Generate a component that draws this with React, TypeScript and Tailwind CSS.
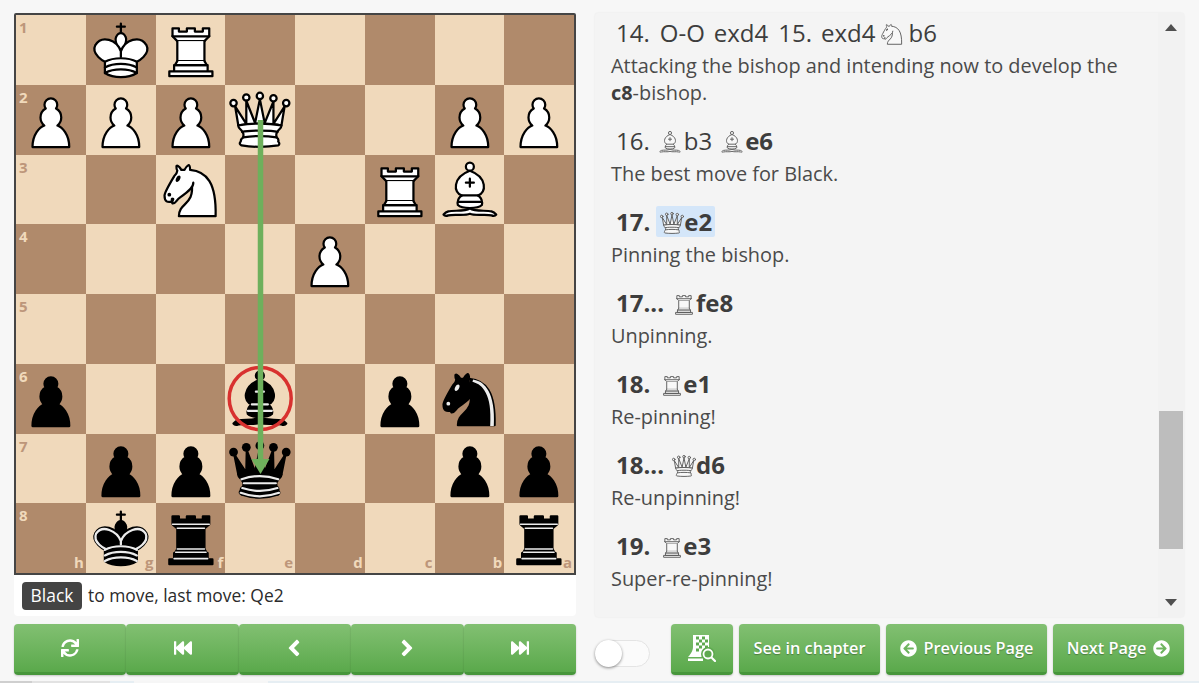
import React from "react";
import { FaSync, FaFastBackward, FaFastForward, FaAngleLeft, FaAngleRight, FaArrowCircleLeft, FaArrowCircleRight } from "react-icons/fa";

type Kind = "K" | "Q" | "R" | "B" | "N" | "P";

const PAWN = "M22.5 9c-2.21 0-4 1.79-4 4 0 .89.29 1.71.78 2.38C17.33 16.5 16 18.59 16 21c0 2.03.94 3.84 2.41 5.03-3 1.06-7.41 5.55-7.41 13.47h23c0-7.92-4.41-12.41-7.41-13.47 1.47-1.19 2.41-3 2.41-5.03 0-2.41-1.33-4.5-3.28-5.62.49-.67.78-1.49.78-2.38 0-2.21-1.79-4-4-4z";
const Q_BASE = "M9 26c0 2 1.5 2 2.5 4 1 1.5 1 1 .5 3.5-1.5 1-1.5 2.5-1.5 2.5-1.5 1.5.5 2.5.5 2.5 6.5 1 16.5 1 23 0 0 0 1.5-1 0-2.5 0 0 .5-1.5-1-2.5-.5-2.5-.5-2 .5-3.5 1-2 2.5-2 2.5-4-8.5-1.5-18.5-1.5-27 0z";
const B1 = "M9 36c3.39-.97 10.11.43 13.5-2 3.39 2.43 10.11 1.03 13.5 2 0 0 1.65.54 3 2-.68.97-1.65.99-3 .5-3.39-.97-10.11.46-13.5-1-3.39 1.46-10.11.03-13.5 1-1.35.49-2.32.47-3-.5 1.35-1.46 3-2 3-2z";
const B2 = "M15 32c2.5 2.5 12.5 2.5 15 0 .5-1.5 0-2 0-2 0-2.5-2.5-4-2.5-4 5.5-1.5 6-11.5-5-15.5-11 4-10.5 14-5 15.5 0 0-2.5 1.5-2.5 4 0 0-.5.5 0 2z";
const B3 = "M25 8a2.5 2.5 0 1 1-5 0 2.5 2.5 0 1 1 5 0z";
const N1 = "M22 10c10.5 1 16.5 8 16 29H15c0-9 10-6.5 8-21";
const N2 = "M24 18c.38 2.91-5.55 7.37-8 9-3 2-2.82 4.34-5 4-1.042-.94 1.41-3.04 0-3-1 0 .19 1.23-1 2-1 0-4.003 1-4-4 0-2 6-12 6-12s1.89-1.9 2-3.5c-.73-.994-.5-2-.5-3 1-1 3 2.5 3 2.5h2s.78-1.992 2.5-3c1 0 1 3 1 3";
const N_EYE = "M9.5 25.5a.5.5 0 1 1-1 0 .5.5 0 1 1 1 0zm5.433-9.75a.5 1.5 30 1 1-.866-.5.5 1.5 30 1 1 .866.5z";
const K_BODY = "M12.5 37c5.5 3.5 14.5 3.5 20 0v-7s9-4.5 6-10.5c-4-6.5-13.5-3.5-16 4V27v-3.5c-2.5-7.5-12-10.5-16-4-3 6 6 10.5 6 10.5v7";
const K_HEAD = "M22.5 25s4.5-7.5 3-10.5c0 0-1-2.5-3-2.5s-3 2.5-3 2.5c-1.5 3 3 10.5 3 10.5";
const K_BANDS = "M12.5 30c5.5-3 14.5-3 20 0m-20 3.5c5.5-3 14.5-3 20 0m-20 3.5c5.5-3 14.5-3 20 0";

function WhiteShape({ kind, fill }: { kind: Kind; fill: string }) {
  switch (kind) {
    case "P":
      return <path d={PAWN} fill={fill} />;
    case "K":
      return (
        <g fill="none">
          <path strokeLinejoin="miter" d="M22.5 11.63V6M20 8h5" />
          <path fill={fill} strokeLinecap="butt" strokeLinejoin="miter" d={K_HEAD} />
          <path fill={fill} d={K_BODY} />
          <path d={K_BANDS} />
        </g>
      );
    case "Q":
      return (
        <g fill={fill}>
          <path d="M8 12a2 2 0 1 1-4 0 2 2 0 1 1 4 0zm16.5-4.5a2 2 0 1 1-4 0 2 2 0 1 1 4 0zM41 12a2 2 0 1 1-4 0 2 2 0 1 1 4 0zM16 8.5a2 2 0 1 1-4 0 2 2 0 1 1 4 0zM33 9a2 2 0 1 1-4 0 2 2 0 1 1 4 0z" />
          <path strokeLinecap="butt" d="M9 26c8.5-1.5 21-1.5 27 0l2-12-7 11V11l-5.5 13.5-3-15-3 15-5.5-14V25L7 14l2 12z" />
          <path strokeLinecap="butt" d={Q_BASE} />
          <path fill="none" d="M11.5 30c3.5-1 18.5-1 22 0M12 33.5c6-1 15-1 21 0" />
        </g>
      );
    case "R":
      return (
        <g fill={fill}>
          <path strokeLinecap="butt" d="M9 39h27v-3H9v3zM12 36v-4h21v4H12zM11 14V9h4v2h5V9h5v2h5V9h4v5" />
          <path d="M34 14l-3 3H14l-3-3" />
          <path strokeLinecap="butt" strokeLinejoin="miter" d="M31 17v12.5H14V17" />
          <path d="M31 29.5l1.5 2.5h-20l1.5-2.5" />
          <path fill="none" strokeLinejoin="miter" d="M11 14h23" />
        </g>
      );
    case "B":
      return (
        <g fill="none">
          <g fill={fill} strokeLinecap="butt">
            <path d={B1} />
            <path d={B2} />
            <path d={B3} />
          </g>
          <path strokeLinejoin="miter" d="M17.5 26h10M15 30h15m-7.5-14.5v5M20 18h5" />
        </g>
      );
    case "N":
      return (
        <g fill="none">
          <path fill={fill} d={N1} />
          <path fill={fill} d={N2} />
          <path fill="currentColor" d={N_EYE} />
        </g>
      );
  }
}

function BlackShape({ kind }: { kind: Kind }) {
  switch (kind) {
    case "P":
      return <path d={PAWN} fill="#000" />;
    case "K":
      return (
        <g fill="none">
          <path strokeLinejoin="miter" d="M22.5 11.63V6" />
          <path fill="#000" strokeLinecap="butt" strokeLinejoin="miter" d={K_HEAD} />
          <path fill="#000" d={K_BODY} />
          <path strokeLinejoin="miter" d="M20 8h5" />
          <path stroke="#ececec" d="M32 29.5s8.5-4 6.03-9.65C34.15 14 25 18 22.5 24.5v2.1-2.1C20 18 10.85 14 6.97 19.85 4.5 25.5 13 29.5 13 29.5" />
          <path stroke="#ececec" d={K_BANDS} />
        </g>
      );
    case "Q":
      return (
        <g fill="#000">
          <g stroke="none">
            <circle cx="6" cy="12" r="2.75" />
            <circle cx="14" cy="9" r="2.75" />
            <circle cx="22.5" cy="8" r="2.75" />
            <circle cx="31" cy="9" r="2.75" />
            <circle cx="39" cy="12" r="2.75" />
          </g>
          <path strokeLinecap="butt" d="M9 26c8.5-1.5 21-1.5 27 0l2.5-12.5L31 25l-.3-14.1-5.2 13.6-3-14.5-3 14.5-5.2-13.6L14 25 6.5 13.5 9 26z" />
          <path strokeLinecap="butt" d={Q_BASE} />
          <path fill="none" strokeLinecap="butt" d="M11 38.5a35 35 1 0 0 23 0" />
          <path fill="none" stroke="#ececec" d="M11 29a35 35 1 0 1 23 0m-21.5 2.5h20m-21 3a35 35 1 0 0 22 0m-23 3a35 35 1 0 0 24 0" />
        </g>
      );
    case "R":
      return (
        <g fill="#000">
          <path strokeLinecap="butt" d="M9 39h27v-3H9v3zM12.5 32l1.5-2.5h17l1.5 2.5h-20zM12 36v-4h21v4H12z" />
          <path strokeLinecap="butt" strokeLinejoin="miter" d="M14 29.5v-13h17v13H14z" />
          <path strokeLinecap="butt" d="M14 16.5L11 14h23l-3 2.5H14zM11 14V9h4v2h5V9h5v2h5V9h4v5H11z" />
          <path fill="none" stroke="#ececec" strokeLinejoin="miter" strokeWidth="1" d="M12 35.5h21M13 31.5h19M14 29.5h17M14 16.5h17M11 14h23" />
        </g>
      );
    case "B":
      return (
        <g fill="none">
          <g fill="#000" strokeLinecap="butt">
            <path d={B1} />
            <path d={B2} />
            <path d={B3} />
          </g>
          <path stroke="#ececec" strokeLinejoin="miter" d="M17.5 26h10M15 30h15m-7.5-14.5v5M20 18h5" />
        </g>
      );
    case "N":
      return (
        <g fill="none">
          <path fill="#000" d={N1} />
          <path fill="#000" d={N2} />
          <path fill="#ececec" stroke="#ececec" d={N_EYE} />
          <path fill="#ececec" stroke="none" d="M24.55 10.4l-.45 1.45.5.15c3.15 1 5.65 2.49 7.9 6.75S35.75 29.06 35.25 39l-.05.5h2.25l.05-.5c.5-10.06-.88-16.85-3.25-21.34-2.37-4.49-5.79-6.64-9.19-7.16l-.51-.1z" />
        </g>
      );
  }
}

function BoardPiece({ code }: { code: string }) {
  const kind = code[1] as Kind;
  return (
    <svg viewBox="0 0 45 45" className="block h-full w-full scale-[1.03] text-black" stroke="#000" strokeWidth="1.4" strokeLinecap="round" strokeLinejoin="round" fillRule="evenodd">
      {code[0] === "w" ? <WhiteShape kind={kind} fill="#fff" /> : <BlackShape kind={kind} />}
    </svg>
  );
}

function Fig({ kind, className }: { kind: Kind; className?: string }) {
  return (
    <svg viewBox="0 0 45 45" className={`inline-block h-[28px] w-[28px] align-[-6px] text-[#555] ${className ?? ""}`} stroke="#5a5a5a" strokeWidth="1.5" strokeLinecap="round" strokeLinejoin="round" fillRule="evenodd">
      <WhiteShape kind={kind} fill="#f8f8f8" />
    </svg>
  );
}

const BOARD: string[][] = [
  ["", "wK", "wR", "", "", "", "", ""],
  ["wP", "wP", "wP", "wQ", "", "", "wP", "wP"],
  ["", "", "wN", "", "", "wR", "wB", ""],
  ["", "", "", "", "wP", "", "", ""],
  ["", "", "", "", "", "", "", ""],
  ["bP", "", "", "bB", "", "bP", "bN", ""],
  ["", "bP", "bP", "bQ", "", "", "bP", "bP"],
  ["", "bK", "bR", "", "", "", "", "bR"],
];
const FILES = ["h", "g", "f", "e", "d", "c", "b", "a"];

function Board() {
  return (
    <div className="relative h-[562px] w-[562px] rounded-t-[2px] border-2 border-[#454545]">
      <div className="grid h-[558px] w-[558px] grid-cols-8 grid-rows-8">
        {BOARD.flatMap((row, r) =>
          row.map((code, c) => {
            const light = (r + c) % 2 === 0;
            return (
              <div key={`${r}-${c}`} className={light ? "relative bg-[#f0d9bb] text-[#bd967a]" : "relative bg-[#b08a6b] text-[#f0d9bb]"}>
                {code && <BoardPiece code={code} />}
                {c === 0 && <span className="absolute left-[3px] top-[2px] text-[15px] font-bold leading-[20px]">{r + 1}</span>}
                {r === 7 && <span className="absolute bottom-[1px] right-[2px] text-[15px] font-bold leading-[20px]">{FILES[c]}</span>}
              </div>
            );
          })
        )}
      </div>
      <svg viewBox="0 0 558 558" className="pointer-events-none absolute left-0 top-0 h-[558px] w-[558px]">
        <circle cx="244.2" cy="383.5" r="31" fill="none" stroke="#d8312f" strokeWidth="3.5" />
        <path d="M244.5 105V447" stroke="#6eb05c" strokeWidth="5.5" fill="none" />
        <path d="M235.5 444 H253.5 L244.5 459 Z" fill="#6eb05c" />
      </svg>
    </div>
  );
}

const GREEN = "flex h-[51px] items-center justify-center rounded-[4px] border-b-[3px] border-[#47963b] bg-gradient-to-b from-[#82c072] to-[#5aa94b] text-white shadow-[0_1px_2px_rgba(0,0,0,0.2)] [text-shadow:0_1px_1px_rgba(0,0,0,0.3)]";

function NavButton({ children }: { children: React.ReactNode }) {
  return <div className={`${GREEN} flex-1`}>{children}</div>;
}

function TextButton({ w, children }: { w: string; children: React.ReactNode }) {
  return <div className={`${GREEN} ${w} gap-[7px] text-[16.3px] font-semibold`}>{children}</div>;
}

function BoardSearchIcon() {
  return (
    <svg viewBox="0 0 28 27" className="h-[27px] w-[28px]" fill="#fff">
      <path d="M5 0h16v13l-5 3-2 6H0c2-2 5-6 5-10z" />
      <g fill="#5fa950">
        <rect x="8" y="1.5" width="3" height="3" />
        <rect x="14" y="1.5" width="3" height="3" />
        <rect x="11" y="4.5" width="3" height="3" />
        <rect x="17" y="4.5" width="3" height="3" />
        <rect x="8" y="7.5" width="3" height="3" />
        <rect x="14" y="7.5" width="3" height="3" />
        <rect x="11" y="10.5" width="3" height="3" />
        <rect x="17" y="10.5" width="3" height="3" />
        <rect x="8" y="13.5" width="3" height="3" />
      </g>
      <circle cx="20" cy="19" r="7" fill="#5fa950" />
      <circle cx="20" cy="19" r="4.5" fill="none" stroke="#fff" strokeWidth="1.8" />
      <path d="M23.5 22.5L27 26" stroke="#fff" strokeWidth="2.2" strokeLinecap="round" />
      <rect x="0" y="23.5" width="15" height="2.5" />
    </svg>
  );
}

function MoveLine({ children }: { children: React.ReactNode }) {
  return <div className="h-[32px] whitespace-nowrap pl-[5px] text-[24px] leading-[32px] text-[#3d3d3d]">{children}</div>;
}

function Comment({ children, last }: { children: React.ReactNode; last?: boolean }) {
  return <p className={last ? "mt-[3px] text-[19.9px] leading-[27px] text-[#4a4a4a]" : "mb-[19px] mt-[3px] text-[19.9px] leading-[27px] text-[#4a4a4a]"}>{children}</p>;
}

export default function App() {
  return (
    <div className="relative flex h-[683px] w-[1199px] gap-[19px] overflow-hidden bg-[#f7f7f7] pl-[14px] pt-[13px] font-['Open_Sans',sans-serif]">
      <div className="flex w-[562px] flex-col">
        <Board />
        <div className="flex h-[41px] items-center gap-[6px] rounded-b-[4px] bg-white pl-[8px] text-[17.4px] text-[#2b2b2b]">
          <span className="flex h-[28px] w-[60px] items-center justify-center rounded-[4px] bg-[#444] text-white">Black</span>
          <span>to move, last move: Qe2</span>
        </div>
        <div className="mt-[8px] flex">
          <NavButton><FaSync className="h-[18px] w-[18px]" /></NavButton>
          <NavButton><FaFastBackward className="h-[18px] w-[18px]" /></NavButton>
          <NavButton><FaAngleLeft className="mr-[3px] h-[26px] w-[26px]" /></NavButton>
          <NavButton><FaAngleRight className="h-[26px] w-[26px]" /></NavButton>
          <NavButton><FaFastForward className="h-[18px] w-[18px]" /></NavButton>
        </div>
      </div>
      <div className="flex w-[589px] flex-col">
        <div className="flex h-[604px] overflow-hidden rounded-[3px] bg-[#f4f4f4] shadow-[0_0_2px_rgba(0,0,0,0.08)]">
          <div className="min-w-0 flex-1 pl-[16px] pt-[4px]">
            <MoveLine>
              <span className="mr-[10px]">14.</span>
              <span className="mr-[9px]">O-O</span>
              <span className="mr-[10px]">exd4</span>
              <span className="mr-[9px]">15.</span>
              <span className="mr-[3px]">exd4</span>
              <Fig kind="N" className="mr-[2px]" />b6
            </MoveLine>
            <Comment>Attacking the bishop and intending now to develop the<br /><b className="text-[#3d3d3d]">c8</b>-bishop.</Comment>
            <MoveLine>
              <span className="mr-[6px]">16.</span>
              <Fig kind="B" />
              <span className="mr-[6px]">b3</span>
              <Fig kind="B" className="-mr-[1px]" /><b>e6</b>
            </MoveLine>
            <Comment>The best move for Black.</Comment>
            <MoveLine>
              <b className="mr-[6px]">17.</b>
              <span className="inline-block h-[31px] rounded-[2px] bg-[#d4e6f9] pl-[2px] pr-[3px] font-bold leading-[31px]"><Fig kind="Q" className="-mr-[2px]" />e2</span>
            </MoveLine>
            <Comment>Pinning the bishop.</Comment>
            <MoveLine><b className="mr-[6px]">17...</b><Fig kind="R" className="-mr-[2px]" /><b>fe8</b></MoveLine>
            <Comment>Unpinning.</Comment>
            <MoveLine><b className="mr-[8px]">18.</b><Fig kind="R" className="-mr-[3px]" /><b>e1</b></MoveLine>
            <Comment>Re-pinning!</Comment>
            <MoveLine><b className="mr-[6px]">18...</b><Fig kind="Q" className="-mr-[2px]" /><b>d6</b></MoveLine>
            <Comment>Re-unpinning!</Comment>
            <MoveLine><b className="mr-[8px]">19.</b><Fig kind="R" className="-mr-[3px]" /><b>e3</b></MoveLine>
            <Comment last>Super-re-pinning!</Comment>
          </div>
          <div className="flex w-[26px] flex-col bg-[#f2f2f2] px-[1px]">
            <div className="flex h-[18px] items-end justify-center">
              <div className="h-0 w-0 border-x-[6.5px] border-b-[7px] border-x-transparent border-b-[#505050]" />
            </div>
            <div className="mt-[380px] h-[138px] bg-[#bdbdbd]" />
            <div className="flex h-[68px] items-end justify-center pb-[11px]">
              <div className="h-0 w-0 border-x-[6.5px] border-t-[7px] border-x-transparent border-t-[#505050]" />
            </div>
          </div>
        </div>
        <div className="mt-[7px] flex items-center">
          <div className="relative mt-[7px] h-[27px] w-[55px] rounded-full border border-[#e4e4e4] bg-[#fbfbfb]">
            <div className="absolute -left-px -top-px h-[27px] w-[27px] rounded-full bg-white shadow-[0_1px_3px_rgba(0,0,0,0.45)]" />
          </div>
          <div className={`${GREEN} ml-[21px] w-[62px]`}><BoardSearchIcon /></div>
          <div className="ml-[6px]"><TextButton w="w-[141px]">See in chapter</TextButton></div>
          <div className="ml-[6px]"><TextButton w="w-[161px]"><FaArrowCircleLeft className="h-[17px] w-[17px]" />Previous Page</TextButton></div>
          <div className="ml-[6px]"><TextButton w="w-[131px]">Next Page<FaArrowCircleRight className="h-[17px] w-[17px]" /></TextButton></div>
        </div>
      </div>
      <div className="absolute bottom-0 left-0 flex h-[2px] w-full bg-[#e6eef3]">
        <div className="h-full w-[32px] bg-[#cfcfcf]" />
        <div className="h-full w-[78px] bg-[#e2e2e2]" />
        <div className="ml-[24px] h-full w-[134px] bg-[#f6f6f6]" />
      </div>
    </div>
  );
}
